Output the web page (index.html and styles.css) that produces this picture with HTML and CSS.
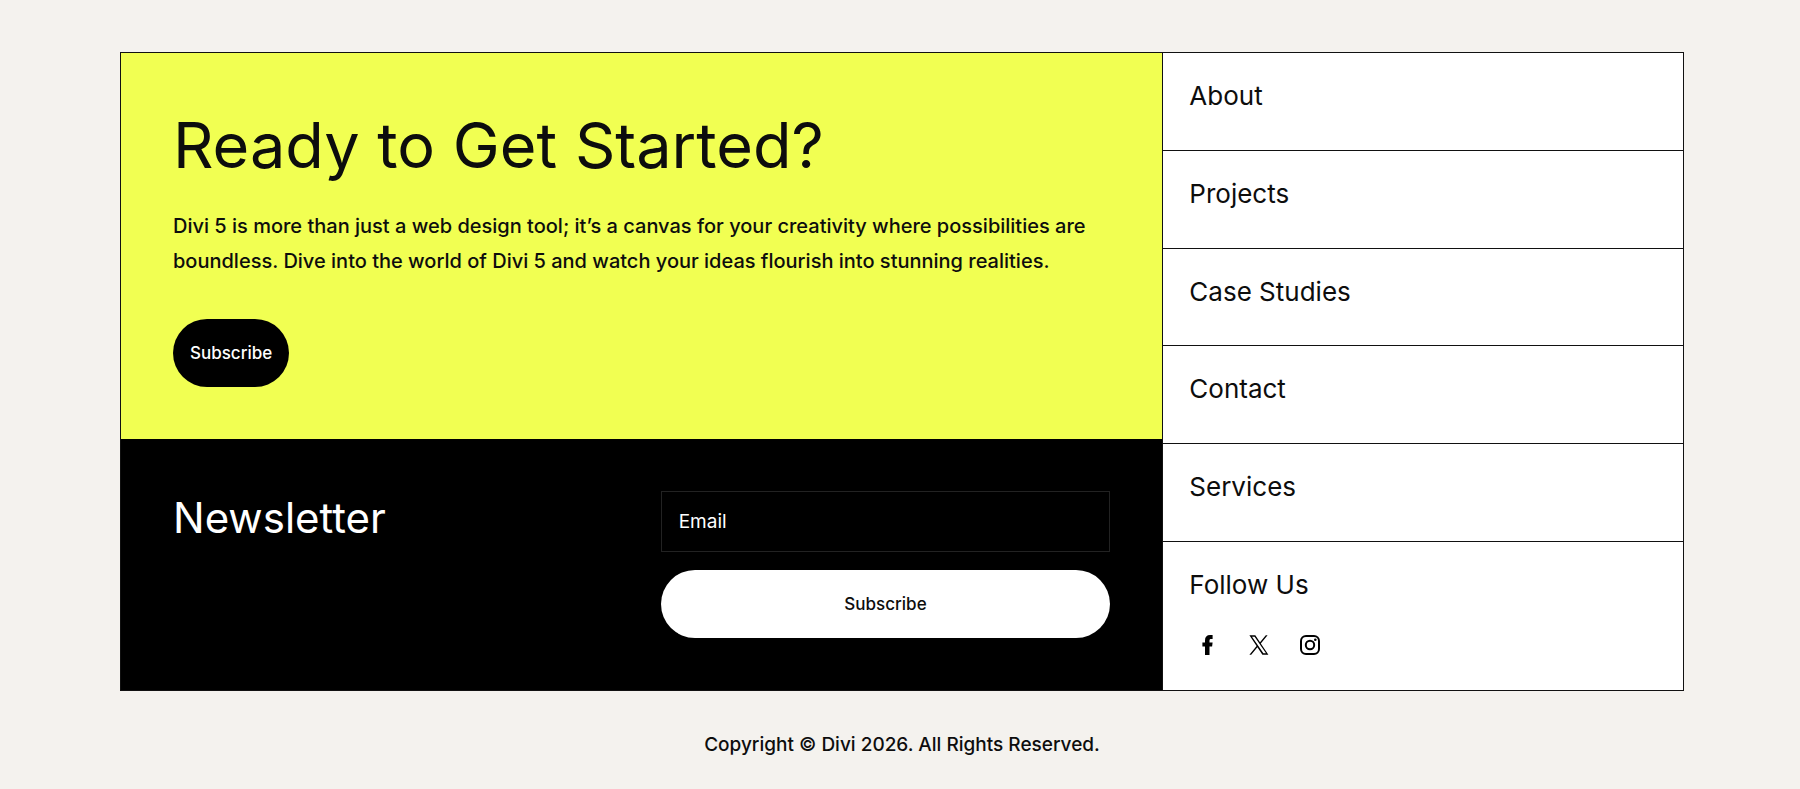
FILE: index.html
```html
<!DOCTYPE html>
<html lang="en">
<head>
<meta charset="utf-8">
<meta name="viewport" content="width=device-width, initial-scale=1">
<title>Divi</title>
<link rel="stylesheet" href="styles.css">
</head>
<body>
<footer class="site-footer">
  <div class="panel">
    <div class="panel-main">
      <section class="cta">
        <h1 class="cta-title">Ready to Get Started?</h1>
        <p class="cta-text">Divi 5 is more than just a web design tool; it’s a canvas for your creativity where possibilities are boundless. Dive into the world of Divi 5 and watch your ideas flourish into stunning realities.</p>
        <button class="button button-dark" type="button">Subscribe</button>
      </section>
      <section class="newsletter">
        <h2 class="newsletter-title">Newsletter</h2>
        <form class="newsletter-form">
          <input class="field" type="email" aria-label="Email" placeholder="Email">
          <button class="button button-light" type="button">Subscribe</button>
        </form>
      </section>
    </div>
    <nav class="links" aria-label="Footer">
      <div class="cell"><a class="link" href="#">About</a></div>
      <div class="cell"><a class="link" href="#">Projects</a></div>
      <div class="cell"><a class="link" href="#">Case Studies</a></div>
      <div class="cell"><a class="link" href="#">Contact</a></div>
      <div class="cell"><a class="link" href="#">Services</a></div>
      <div class="cell follow">
        <span class="link">Follow Us</span>
        <div class="social">
          <a class="social-link" href="#" aria-label="Facebook"><svg class="icon" viewBox="0 0 20 20"><path d="M7 20v-8.6H4.4V7.4H7V5.4C7 1.9 8.8 0 12.1 0h2.5v4h-1.5c-1.2 0-1.6.5-1.6 1.5v1.9h3.1l-.5 4h-2.6V20z"/></svg></a>
          <a class="social-link" href="#" aria-label="X"><svg class="icon" viewBox="0 0 20 20"><path fill-rule="evenodd" d="M11.8 8.5 18.6.3h-1.8L11 7.2 6.3.3H.4l7.2 10.8-7.2 8.6h1.8l6.2-7.4 5 7.4h6zM3 1.7h2.6L17 18.3h-2.6z"/></svg></a>
          <a class="social-link" href="#" aria-label="Instagram"><svg class="icon" viewBox="0 0 20 20"><rect class="stroke" x="1" y="1" width="18" height="18" rx="5"/><circle class="stroke" cx="10" cy="10" r="4.2"/><circle cx="15.3" cy="4.7" r="1.3"/></svg></a>
        </div>
      </div>
    </nav>
  </div>
  <p class="copyright">Copyright © Divi 2026. All Rights Reserved.</p>
</footer>
</body>
</html>
```
FILE: styles.css
```css
* {
  box-sizing: border-box;
}

body {
  margin: 0;
  background: #f4f2ee;
  color: #0d0d0d;
  font-family: Inter, "Liberation Sans", sans-serif;
}

.site-footer {
  padding: 52px 116px 24px 120px;
}

.panel {
  display: grid;
  grid-template-columns: 2fr 1fr;
  border: 1px solid #111;
  background: #fff;
}

.cta {
  padding: 52px;
  background: #f1ff52;
}

.cta-title {
  margin: 0 0 24px;
  font-size: 63px;
  font-weight: 400;
  line-height: 80px;
}

.cta-text {
  margin: 0 0 40px;
  font-size: 20px;
  font-weight: 500;
  line-height: 35px;
}

.button {
  display: block;
  height: 68px;
  padding: 0 17px;
  border: 0;
  border-radius: 34px;
  font: 500 17px Inter, "Liberation Sans", sans-serif;
  cursor: pointer;
}

.button-dark {
  background: #000;
  color: #fff;
}

.button-light {
  width: 100%;
  background: #fff;
  color: #0d0d0d;
}

.newsletter {
  display: grid;
  grid-template-columns: 1fr 1fr;
  gap: 38px;
  padding: 52px;
  background: #000;
  color: #fff;
}

.newsletter-title {
  margin: 0;
  font-size: 42px;
  font-weight: 400;
  line-height: 54px;
}

.newsletter-form {
  display: grid;
  gap: 18px;
}

.field {
  width: 100%;
  height: 61px;
  padding: 0 17px;
  border: 1px solid #222;
  border-radius: 0;
  background: #000;
  color: #fff;
  font: 400 19px Inter, "Liberation Sans", sans-serif;
}

.field::placeholder {
  color: #fff;
  opacity: 1;
}

.links {
  display: grid;
  grid-template-rows: repeat(5, 1fr) auto;
  border-left: 1px solid #111;
}

.cell {
  padding: 26px;
  border-bottom: 1px solid #111;
}

.follow {
  border-bottom: 0;
}

.link {
  display: block;
  color: inherit;
  font-size: 26px;
  line-height: 34px;
  text-decoration: none;
}

.social {
  display: flex;
  gap: 13px;
  margin-top: 24px;
}

.social-link {
  display: grid;
  place-items: center;
  width: 38px;
  height: 38px;
  color: #000;
}

.icon {
  width: 20px;
  height: 20px;
  fill: currentColor;
}

.stroke {
  fill: none;
  stroke: currentColor;
  stroke-width: 2;
}

.copyright {
  margin: 36px 0 0;
  font-size: 19px;
  font-weight: 500;
  line-height: 35px;
  text-align: center;
}
```
